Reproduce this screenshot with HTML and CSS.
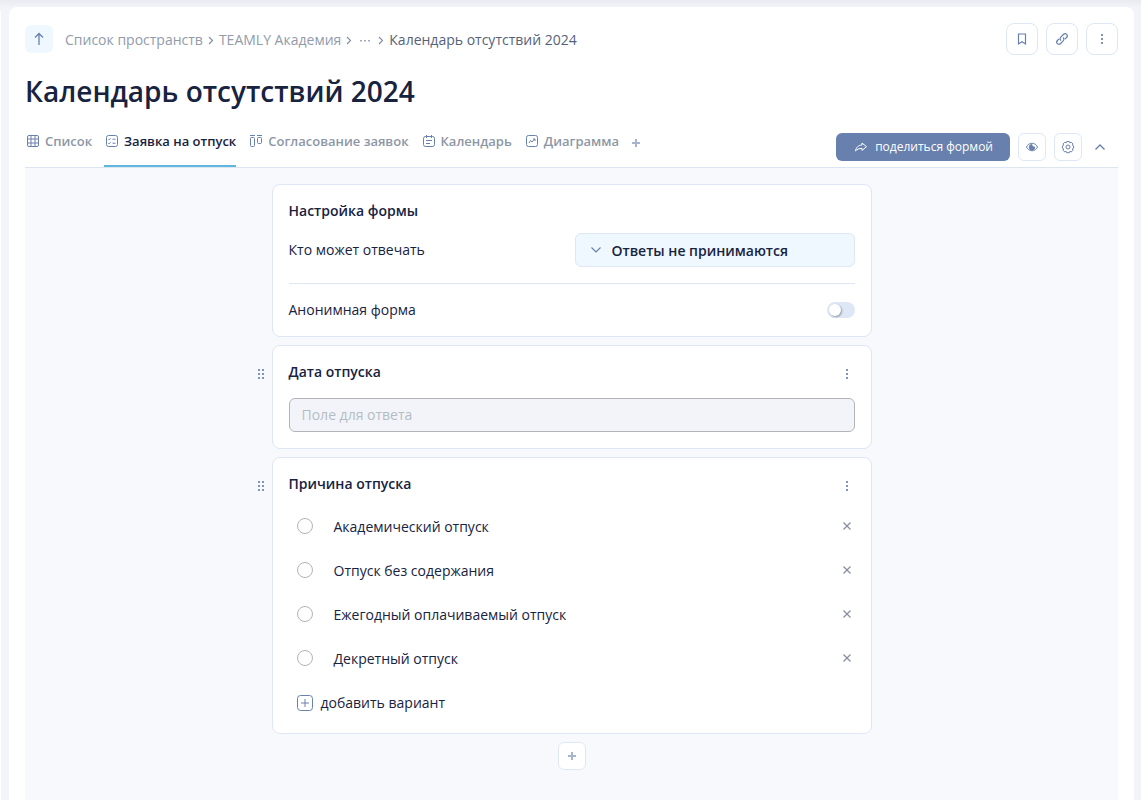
FILE: index.html
```html
<!DOCTYPE html>
<html lang="ru">
<head>
<meta charset="utf-8">
<meta name="viewport" content="width=device-width, initial-scale=1">
<title>Календарь отсутствий 2024</title>
<link rel="stylesheet" href="styles.css">
</head>
<body>
<div class="shell">
  <div class="sidebar-edge"></div>
  <main class="page">
    <header class="topbar">
      <button class="up-button" aria-label="Наверх">
        <svg class="icon" width="16" height="16" viewBox="0 0 16 16"><path d="M8 14V3M4 6.500 8 2.500l4 4" stroke-width="1.300"/></svg>
      </button>
      <nav class="crumbs" aria-label="Навигация">
        <a href="#">Список пространств</a>
        <svg class="crumb-sep" width="8" height="10" viewBox="0 0 8 10"><path d="M2 2l3.500 3.500L2 9"/></svg>
        <a href="#">TEAMLY Академия</a>
        <svg class="crumb-sep" width="8" height="10" viewBox="0 0 8 10"><path d="M2 2l3.500 3.500L2 9"/></svg>
        <button class="crumb-more" aria-label="Ещё"><svg width="12" height="10" viewBox="0 0 12 10"><path d="M1 5h2v1.500H1zM5 5h2v1.500H5zM9 5h2v1.500H9z" fill="#a3abba"/></svg></button>
        <svg class="crumb-sep" width="8" height="10" viewBox="0 0 8 10"><path d="M2 2l3.500 3.500L2 9"/></svg>
        <a class="current" href="#" aria-current="page">Календарь отсутствий 2024</a>
      </nav>
      <div class="page-actions">
        <button class="square large" aria-label="В закладки"><svg class="icon" width="16" height="16" viewBox="0 0 16 16"><path d="M4.500 3h7v10L8 10.800 4.500 13z" stroke-width="1.200"/></svg></button>
        <button class="square large" aria-label="Ссылка"><svg class="icon" width="16" height="16" viewBox="0 0 16 16"><path d="M7 9.600C5.700 8.300 5.900 7 7 5.900l2.400-2.400c1-1 2.500-1 3.300-.2s.8 2.200-.1 3.200l-1.700 1.700M9 6.400c1.300 1.300 1.100 2.600 0 3.700l-2.400 2.400c-1 1-2.500 1-3.300.2s-.8-2.200.1-3.200l1.700-1.700" stroke-width="1.200"/></svg></button>
        <button class="square large" aria-label="Меню"><svg class="dots" width="16" height="16" viewBox="0 0 16 16"><path d="M7 3h2v2H7zM7 7h2v2H7zM7 11h2v2H7z"/></svg></button>
      </div>
    </header>

    <h1>Календарь отсутствий 2024</h1>

    <div class="viewbar">
      <nav class="tabs" aria-label="Представления">
        <a class="tab" href="#"><svg class="icon" width="14" height="14" viewBox="0 0 14 14"><rect x="1.500" y="1.500" width="11" height="11" rx="1.500"/><path d="M5 1.500v11M9 1.500v11M1.500 5h11M1.500 9h11"/></svg>Список</a>
        <a class="tab active" href="#" aria-current="true"><svg class="icon" width="14" height="14" viewBox="0 0 14 14"><rect x="1.500" y="1.500" width="11" height="11" rx="2"/><path d="M3.300 5l.8.8 1.500-1.600M3.300 9l.8.8 1.500-1.600M7.500 5.200h3M7.500 9.200h3"/></svg>Заявка на отпуск</a>
        <a class="tab" href="#"><svg class="icon" width="14" height="14" viewBox="0 0 14 14"><path d="M1 1.500h5M8 1.500h5"/><rect x="1.500" y="3.500" width="4" height="9" rx="1"/><rect x="8.500" y="3.500" width="4" height="6" rx="1"/></svg>Согласование заявок</a>
        <a class="tab" href="#"><svg class="icon" width="14" height="14" viewBox="0 0 14 14"><rect x="1.500" y="2.500" width="11" height="10" rx="2"/><path d="M4.500 1v3M9.500 1v3M4 6.500h6M4 9.500h4"/></svg>Календарь</a>
        <a class="tab" href="#"><svg class="icon" width="14" height="14" viewBox="0 0 14 14"><rect x="1.500" y="1.500" width="11" height="11" rx="2"/><path d="M4 9l1.500-2.500L7 8l2.500-3M8 5h2v2"/></svg>Диаграмма</a>
        <button class="add-tab" aria-label="Добавить представление"><svg class="icon plus" width="10" height="10" viewBox="0 0 10 10"><path d="M5 1v8M1 5h8"/></svg></button>
      </nav>
      <div class="view-actions">
        <button class="share"><svg width="14" height="14" viewBox="0 0 14 14"><path d="M8 3l4.500 3.700L8 10.400V8.500C5 8.300 3 9.300 1.500 11 2 7.500 4.500 5 8 5z"/></svg>поделиться формой</button>
        <button class="square" aria-label="Просмотр"><svg class="icon" width="14" height="14" viewBox="0 0 14 14"><path d="M1.500 7c2.200-5 8.800-5 11 0-2.200 5-8.800 5-11 0z"/><path d="M7 4.500A2.700 2.700 0 1 0 9.700 7C8 7.200 6.800 6.200 7 4.500z" fill="#6880ae"/></svg></button>
        <button class="square" aria-label="Настройки"><svg class="icon" width="14" height="14" viewBox="0 0 14 14"><path d="M5.700 1.500h2.600l.5 1.300 1.500-.5 1.600 1.600-.5 1.500 1.200.6v2.200l-1.200.6.500 1.500-1.600 1.600-1.500-.5-.5 1.300H5.700l-.5-1.300-1.500.5-1.600-1.600.5-1.500-1.200-.6V6l1.200-.6-.5-1.500 1.600-1.600 1.500.5z"/><circle cx="7" cy="7" r="2"/></svg></button>
        <button class="collapse" aria-label="Свернуть"><svg class="icon" width="12" height="8" viewBox="0 0 12 8"><path d="M1.500 6.500 6 2l4.500 4.500" stroke-width="1.400"/></svg></button>
      </div>
    </div>

    <form class="canvas">
      <section class="card">
        <h2>Настройка формы</h2>
        <div class="setting">
          <label for="respond">Кто может отвечать</label>
          <div class="select">
            <svg class="icon" width="12" height="8" viewBox="0 0 12 8"><path d="M1.500 1.500 6 6l4.500-4.500" stroke-width="1.200"/></svg>
            <select id="respond"><option>Ответы не принимаются</option></select>
          </div>
        </div>
        <div class="setting divided">
          <label for="anonymous">Анонимная форма</label>
          <input class="switch" type="checkbox" role="switch" id="anonymous">
        </div>
      </section>

      <button type="button" class="grip" aria-label="Переместить"><svg class="dots" width="8" height="12" viewBox="0 0 8 12"><path d="M1 1h2v2H1zM5 1h2v2H5zM1 5h2v2H1zM5 5h2v2H5zM1 9h2v2H1zM5 9h2v2H5z"/></svg></button>
      <section class="card">
        <div class="card-head">
          <h2><label for="date">Дата отпуска</label></h2>
          <button type="button" class="mini" aria-label="Меню вопроса"><svg class="dots" width="16" height="16" viewBox="0 0 16 16"><path d="M7 3h2v2H7zM7 7h2v2H7zM7 11h2v2H7z"/></svg></button>
        </div>
        <input class="answer" id="date" type="text" placeholder="Поле для ответа" disabled>
      </section>

      <button type="button" class="grip" aria-label="Переместить"><svg class="dots" width="8" height="12" viewBox="0 0 8 12"><path d="M1 1h2v2H1zM5 1h2v2H5zM1 5h2v2H1zM5 5h2v2H5zM1 9h2v2H1zM5 9h2v2H5z"/></svg></button>
      <section class="card">
        <div class="card-head">
          <h2>Причина отпуска</h2>
          <button type="button" class="mini" aria-label="Меню вопроса"><svg class="dots" width="16" height="16" viewBox="0 0 16 16"><path d="M7 3h2v2H7zM7 7h2v2H7zM7 11h2v2H7z"/></svg></button>
        </div>
        <ul class="options">
          <li><input type="radio" name="reason" id="r1"><label for="r1">Академический отпуск</label><button type="button" class="mini remove" aria-label="Удалить"><svg width="10" height="10" viewBox="0 0 10 10"><path d="M1.500 1.500l7 7M8.500 1.500l-7 7"/></svg></button></li>
          <li><input type="radio" name="reason" id="r2"><label for="r2">Отпуск без содержания</label><button type="button" class="mini remove" aria-label="Удалить"><svg width="10" height="10" viewBox="0 0 10 10"><path d="M1.500 1.500l7 7M8.500 1.500l-7 7"/></svg></button></li>
          <li><input type="radio" name="reason" id="r3"><label for="r3">Ежегодный оплачиваемый отпуск</label><button type="button" class="mini remove" aria-label="Удалить"><svg width="10" height="10" viewBox="0 0 10 10"><path d="M1.500 1.500l7 7M8.500 1.500l-7 7"/></svg></button></li>
          <li><input type="radio" name="reason" id="r4"><label for="r4">Декретный отпуск</label><button type="button" class="mini remove" aria-label="Удалить"><svg width="10" height="10" viewBox="0 0 10 10"><path d="M1.500 1.500l7 7M8.500 1.500l-7 7"/></svg></button></li>
        </ul>
        <button type="button" class="add-option"><svg class="icon" width="16" height="16" viewBox="0 0 16 16"><rect x=".5" y=".5" width="15" height="15" rx="3"/><path d="M8 4v8M4 8h8"/></svg>добавить вариант</button>
      </section>

      <button type="button" class="square add-question" aria-label="Добавить вопрос"><svg class="icon plus" width="10" height="10" viewBox="0 0 10 10"><path d="M5 1v8M1 5h8"/></svg></button>
    </form>
  </main>
</div>
</body>
</html>
```
FILE: styles.css
```css
* {
  box-sizing: border-box;
}

body {
  margin: 0;
  background: linear-gradient(#e9ebf0, #f3f4f9 8px);
  color: #17233f;
  font-family: "Open Sans", "Noto Sans", sans-serif;
  font-size: 14px;
  line-height: 20px;
}

button,
input,
select {
  margin: 0;
  color: inherit;
  font: inherit;
}

button {
  display: inline-flex;
  align-items: center;
  justify-content: center;
  padding: 0;
  border: 0;
  background: none;
}

a {
  color: inherit;
  text-decoration: none;
}

svg {
  display: block;
  flex: none;
}

.icon {
  fill: none;
  stroke: #6880ae;
  stroke-width: 1;
}

.icon.plus {
  stroke: #a6b4cf;
  stroke-width: 2;
}

.dots {
  fill: #7f94bb;
}

.shell {
  display: flex;
  gap: 8px;
  min-height: 100vh;
  padding: 7px 7px 0 0;
}

.sidebar-edge {
  width: 1px;
  margin-top: 4px;
  background: #fff;
}

.page {
  display: flex;
  flex: 1;
  flex-direction: column;
  min-width: 0;
  padding: 16px 16px 0;
  border-radius: 8px 8px 0 0;
  background: #fff;
}

.topbar {
  display: flex;
  align-items: center;
  gap: 12px;
}

.up-button {
  width: 28px;
  height: 28px;
  border-radius: 6px;
  background: #eff8ff;
}

.crumbs {
  display: flex;
  flex: 1;
  align-items: center;
  gap: 4px;
  padding-top: 2px;
  color: #929baa;
}

.crumbs .current {
  color: #56627a;
}

.crumb-sep {
  fill: none;
  stroke: #8490a5;
  stroke-width: 1.2;
}

.crumb-more {
  padding: 0 2px;
}

.page-actions,
.view-actions {
  display: flex;
  gap: 8px;
}

.square {
  width: 28px;
  height: 28px;
  border: 1px solid #dde7f6;
  border-radius: 6px;
  background: #fff;
}

.square.large {
  width: 32px;
  height: 32px;
  border-radius: 8px;
}

h1 {
  margin: 16px 0 22px;
  font-size: 28px;
  font-weight: 600;
  line-height: 40px;
}

.viewbar {
  display: flex;
  justify-content: space-between;
  height: 35px;
  border-bottom: 1px solid #dbe6f2;
}

.tabs {
  display: flex;
  gap: 12px;
}

.tab {
  display: flex;
  gap: 5px;
  padding-left: 1px;
  border-bottom: 2px solid transparent;
  color: #8d97a6;
  font-size: 13px;
  font-weight: 600;
  line-height: 16px;
}

.tab .icon {
  margin-top: 1px;
}

.tab.active {
  border-color: #61b6dc;
  color: #17233f;
}

.add-tab {
  height: 20px;
}

.view-actions {
  padding-right: 8px;
}

.share {
  gap: 7px;
  height: 28px;
  padding: 0 17px 1px 18px;
  border-radius: 6px;
  background: #6880ae;
  color: #fff;
  font-size: 12px;
}

.share svg {
  fill: none;
  stroke: #fff;
}

.collapse {
  width: 20px;
  height: 28px;
}

.canvas {
  display: grid;
  flex: 1;
  grid-template-columns: 1fr minmax(0, 600px) 1fr;
  align-content: start;
  gap: 8px 7px;
  padding: 16px 0 24px;
  background: #f7f9fd;
}

.card {
  grid-column: 2;
  padding: 16px;
  border: 1px solid #dde7f6;
  border-radius: 8px;
  background: #fff;
}

h2 {
  margin: 0;
  font-size: 14px;
  font-weight: 600;
  line-height: 20px;
}

.setting {
  display: flex;
  align-items: center;
  justify-content: space-between;
  padding: 12px 0 16px;
}

.setting.divided {
  padding: 16px 0 0;
  border-top: 1px solid #dde7f6;
}

.select {
  position: relative;
  width: 50%;
  max-width: 280px;
}

.select .icon {
  position: absolute;
  top: 13px;
  left: 15px;
  pointer-events: none;
}

.select select {
  width: 100%;
  height: 34px;
  padding: 1px 16px 0 36px;
  appearance: none;
  border: 1px solid #dde7f6;
  border-radius: 6px;
  background: #eff8ff;
  font-weight: 600;
}

.switch {
  width: 28px;
  height: 16px;
  padding: 2px;
  appearance: none;
  border-radius: 8px;
  background: #dde7f6;
}

.switch::before {
  display: block;
  width: 12px;
  height: 12px;
  border-radius: 50%;
  background: #fff;
  box-shadow: 1px 1px 2px #9299a6;
  content: "";
}

.switch:checked::before {
  margin-left: 12px;
}

.grip {
  grid-column: 1;
  justify-self: end;
  align-self: start;
  width: 8px;
  height: 58px;
}

.card-head {
  display: flex;
  align-items: center;
  justify-content: space-between;
}

.mini {
  width: 16px;
  height: 20px;
}

.card-head .mini {
  padding-top: 4px;
}

.answer {
  display: block;
  width: 100%;
  height: 34px;
  margin-top: 16px;
  padding: 0 12px 1px;
  border: 1px solid #b2b4b9;
  border-radius: 6px;
  background: #f3f4f9;
}

.answer::placeholder {
  color: #b2bec3;
  opacity: 1;
}

.options {
  margin: 10px 0 0;
  padding: 0;
  list-style: none;
}

.options li {
  display: flex;
  align-items: center;
  height: 44px;
  padding-left: 8px;
}

.options input {
  width: 16px;
  height: 16px;
  appearance: none;
  border: 1px solid #b2b4b9;
  border-radius: 50%;
}

.options input:checked {
  border: 5px solid #6880ae;
}

.options label {
  flex: 1;
  padding: 2px 0 0 21px;
}

.remove {
  margin-left: 8px;
}

.remove svg {
  stroke: #858d9e;
  stroke-width: 1.2;
}

.add-option {
  gap: 8px;
  height: 28px;
  margin-top: 9px;
  padding-left: 8px;
}

.add-question {
  grid-column: 2;
  justify-self: center;
}
```
